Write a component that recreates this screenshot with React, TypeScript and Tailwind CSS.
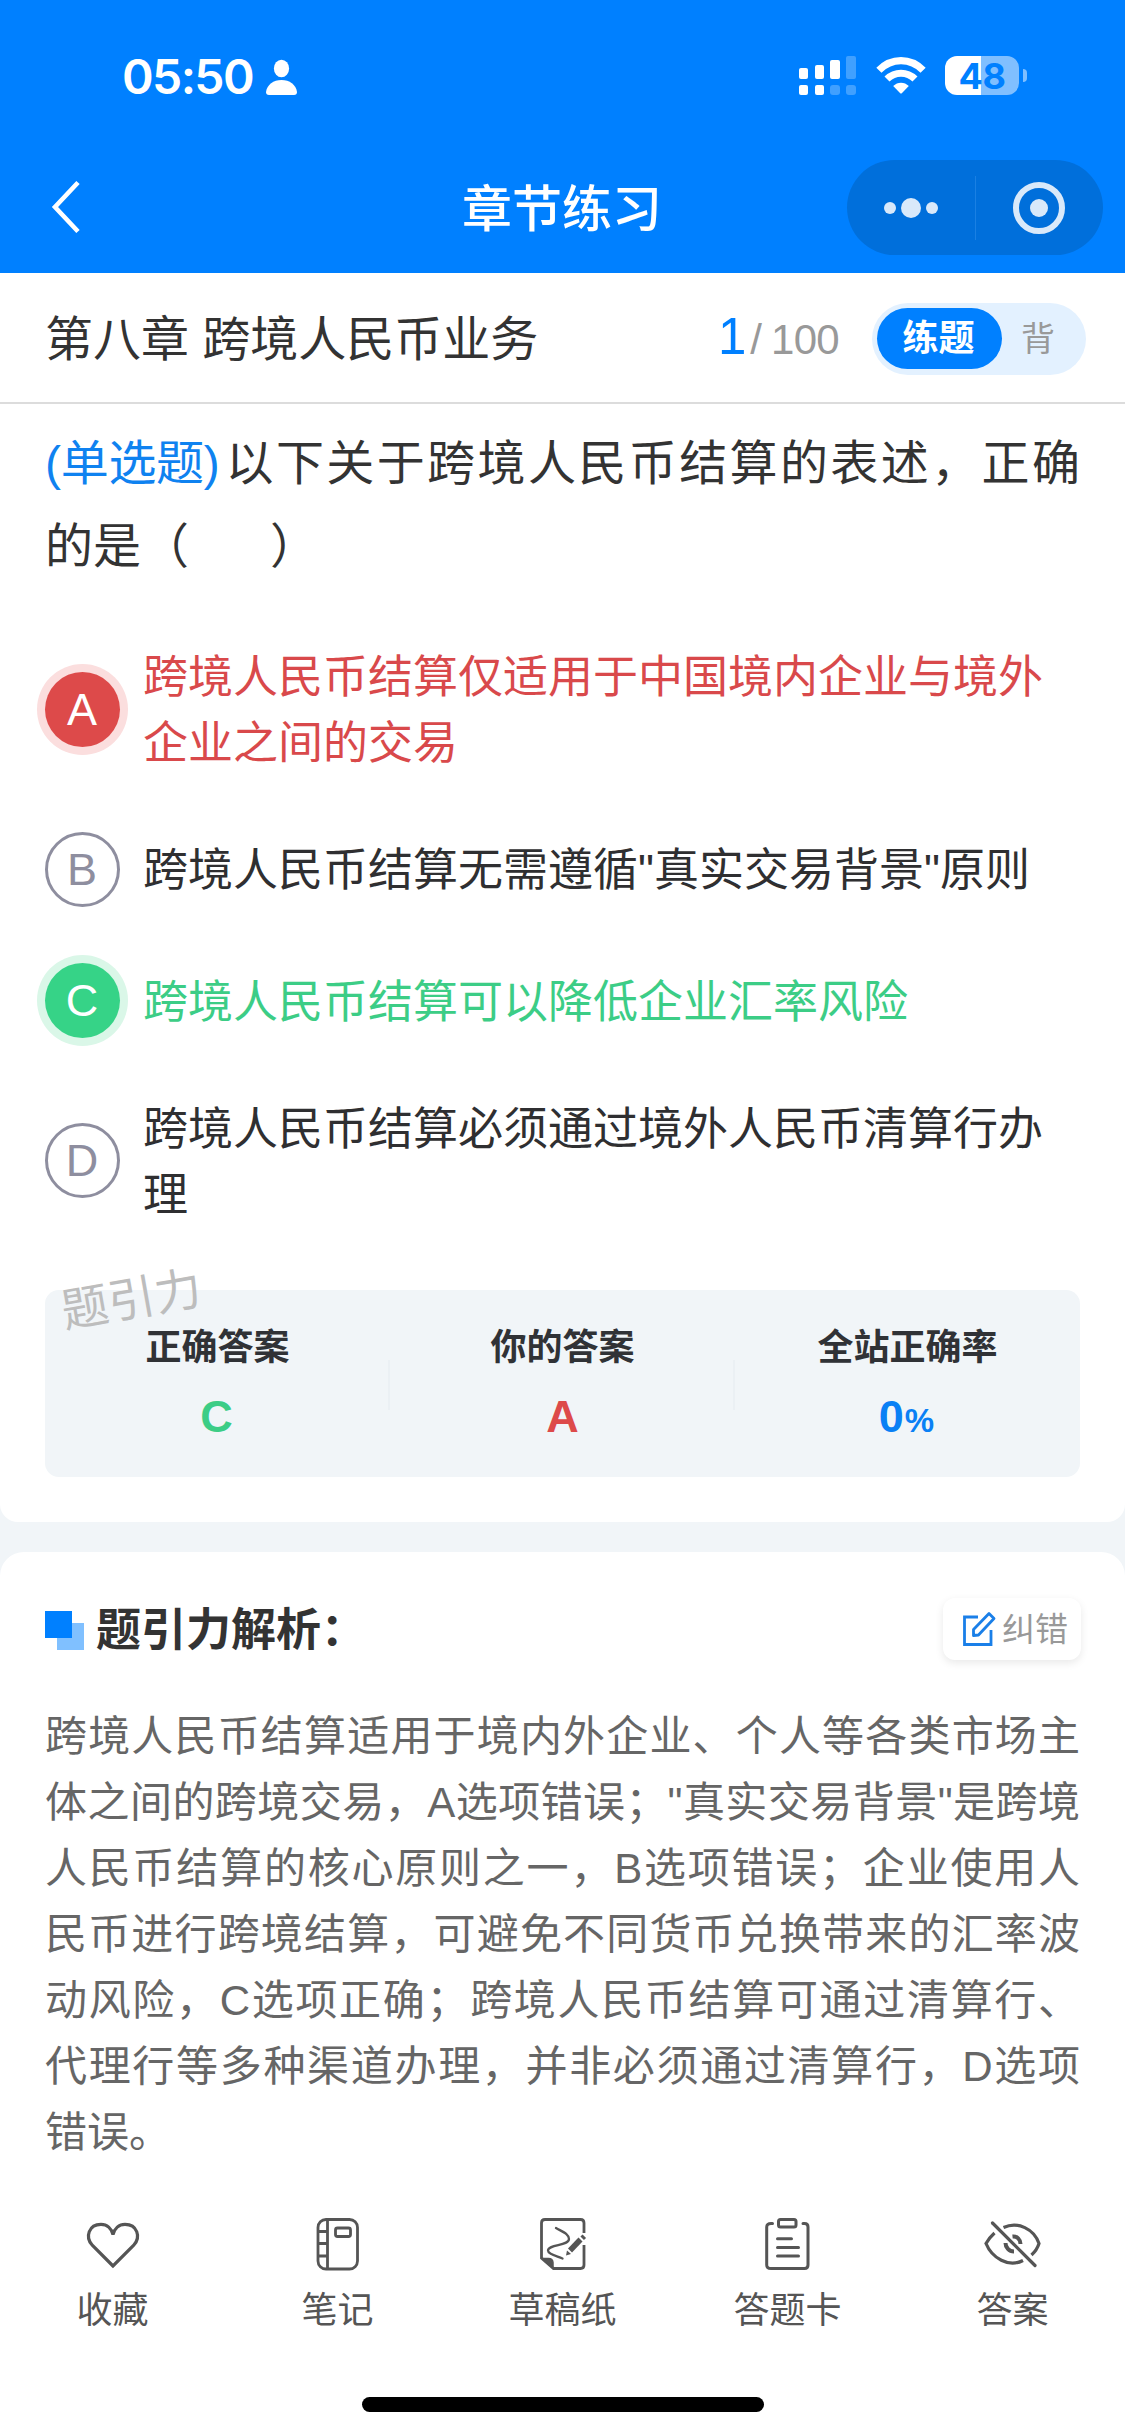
import React from "react";

const CJK = "font-['Liberation_Sans','Noto_Sans_CJK_SC',sans-serif]";

function StatusBar() {
  return (
    <div className="flex h-[149px] items-start justify-between pl-[122px] pr-[98px]">
      <div className="mt-[53px] flex items-center">
        <span className="w-[132px] whitespace-nowrap font-['Inter',sans-serif] text-[48px] font-semibold leading-[48px] tracking-[-1.6px]">
          05:50
        </span>
        <svg className="ml-3" width="31" height="36" viewBox="0 0 31 36" fill="#fff">
          <ellipse cx="15.5" cy="9.5" rx="7.6" ry="8.8" />
          <path d="M3 36Q0 36 0 33C1 25.500 7.500 21 15.500 21S30 25.500 31 33Q31 36 28 36Z" />
        </svg>
      </div>
      <div className="mt-[56px] flex items-start">
        <svg width="57" height="39" viewBox="0 0 57 39" fill="#fff">
          <rect x="0" y="12" width="9" height="11" rx="2" />
          <rect x="16" y="9" width="9" height="14" rx="2" />
          <rect x="31" y="4" width="10" height="19" rx="2" />
          <rect x="47" y="0" width="10" height="23" rx="2" opacity=".25" />
          <rect x="0" y="29" width="9" height="10" rx="2" />
          <rect x="16" y="29" width="9" height="10" rx="2" />
          <rect x="31" y="29" width="10" height="10" rx="3" opacity=".25" />
          <rect x="47" y="29" width="10" height="10" rx="3" opacity=".25" />
        </svg>
        <svg className="ml-5 mt-[1px]" width="50" height="37" viewBox="0 0 50 37" fill="none">
          <path d="M2.900 13.200C15.500 .4 34.500 .4 47.100 13.200" stroke="#fff" strokeWidth="7.200" />
          <path d="M11 22C19 14.300 31 14.300 39 22" stroke="#fff" strokeWidth="7.200" />
          <path d="M17.200 29C21.500 24.500 28.500 24.500 32.800 29L26 36Q25 37 24 36Z" fill="#fff" />
        </svg>
        <div className="ml-[19px] flex items-center gap-1">
          <div className="flex h-[39px] w-[74px] items-center justify-center rounded-[12px] bg-[linear-gradient(90deg,#fff_36px,#80bfff_36px)] font-['Inter',sans-serif] text-[36px] font-bold leading-none tracking-[-0.5px] text-[#0080ff]">
            48
          </div>
          <div className="h-[13px] w-[4px] rounded-r-full bg-[#80bfff]" />
        </div>
      </div>
    </div>
  );
}

function NavBar() {
  return (
    <div className="grid h-[124px] grid-cols-[1fr_auto_1fr] items-start">
      <svg className="ml-[50px] mt-[31px]" width="32" height="54" viewBox="0 0 32 54" fill="none" stroke="#fff" strokeWidth="4.600">
        <path d="M28 2.500L5 27L28 51.500" />
      </svg>
      <h1 className="mt-[30px] text-[50px] font-medium leading-[62px] -ml-px">章节练习</h1>
      <div className="mr-[22px] mt-[11px] flex h-[95px] w-[256px] items-center justify-self-end rounded-full bg-[#006fdb]">
        <div className="flex flex-1 items-center justify-center gap-[5px]">
          <i className="size-[12px] rounded-full bg-[#d9e9fa]" />
          <i className="size-[20px] rounded-full bg-[#d9e9fa]" />
          <i className="size-[12px] rounded-full bg-[#d9e9fa]" />
        </div>
        <div className="h-[64px] w-px bg-[#1a80e3]" />
        <div className="flex flex-1 items-center justify-center">
          <div className="flex size-[52px] items-center justify-center rounded-full border-[6px] border-[#d9e9fa]">
            <i className="size-[18px] rounded-full bg-[#d9e9fa]" />
          </div>
        </div>
      </div>
    </div>
  );
}

function ChapterBar() {
  return (
    <div className="flex h-[131px] items-center border-b-2 border-[#dcdcdc] pl-[45px] pr-[39px] pt-[2px]">
      <div className="whitespace-nowrap pt-[3px] text-[48px] leading-[64px] text-[#333]">第八章 跨境人民币业务</div>
      <div className="ml-auto flex items-baseline font-['Liberation_Sans',sans-serif] text-[42px] leading-[60px] text-[#999]">
        <span className="text-[51px] text-[#0080ff]">1</span>
        <span className="ml-[4px]">/</span>
        <span className="ml-[9px] tracking-[-0.7px]">100</span>
      </div>
      <div className="ml-[33px] flex h-[72px] w-[214px] items-center rounded-full bg-[#e3f1ff] p-[5px]">
        <div className="flex h-[61px] w-[125px] items-center justify-center rounded-full bg-[#0080ff] pr-[2px] pt-px text-[36px] font-bold text-white">
          练题
        </div>
        <div className="ml-[19px] pt-[2px] text-[34px] text-[#999]">背</div>
      </div>
    </div>
  );
}

type Tone = "wrong" | "right" | "plain";

const options: { key: string; lines: string[]; tone: Tone }[] = [
  { key: "A", lines: ["跨境人民币结算仅适用于中国境内企业与境外", "企业之间的交易"], tone: "wrong" },
  { key: "B", lines: ['跨境人民币结算无需遵循"真实交易背景"原则'], tone: "plain" },
  { key: "C", lines: ["跨境人民币结算可以降低企业汇率风险"], tone: "right" },
  { key: "D", lines: ["跨境人民币结算必须通过境外人民币清算行办", "理"], tone: "plain" },
];

const circleTone: Record<Tone, string> = {
  wrong: "bg-[#dd4a4a] text-white ring-[8px] ring-[#fbdede]",
  right: "bg-[#36d387] text-white ring-[8px] ring-[#daf7e8]",
  plain: "border-[3px] border-[#8e8e9f] text-[#8e8e9f]",
};

const textTone: Record<Tone, string> = {
  wrong: "text-[#d9494b]",
  right: "text-[#3ccd86]",
  plain: "text-[#2f2f31]",
};

function Options() {
  return (
    <div className="mt-[55px] flex flex-col gap-[56.5px]">
      {options.map((o) => (
        <div key={o.key} className="flex items-center gap-[23px]">
          <div
            className={`flex size-[75px] shrink-0 items-center justify-center rounded-full pr-px text-[45px] leading-none ${circleTone[o.tone]}`}
          >
            {o.key}
          </div>
          <div className={`-mb-[2px] whitespace-nowrap pt-[2px] text-[45px] leading-[66px] ${textTone[o.tone]}`}>
            {o.lines.map((l) => (
              <div key={l}>{l}</div>
            ))}
          </div>
        </div>
      ))}
    </div>
  );
}

function Summary() {
  return (
    <div className="relative mt-[63px] grid h-[187px] grid-cols-3 rounded-[14px] bg-[#f1f5f8]">
      <div className="absolute left-[16px] top-[-24px] -rotate-[10deg] whitespace-nowrap text-[47px] leading-[68px] text-[#bdbdbd]">
        题引力
      </div>
      <div className="relative flex flex-col items-center pt-[33px]">
        <div className="text-[36px] font-bold leading-[50px] text-[#303236]">正确答案</div>
        <div className="mt-[18px] pr-[2px] text-[45px] font-bold leading-[52px] text-[#3ccd86]">C</div>
        <i className="absolute right-0 top-[70px] h-[50px] w-[2px] bg-[#ebf0f4]" />
      </div>
      <div className="relative flex flex-col items-center pt-[33px]">
        <div className="text-[36px] font-bold leading-[50px] text-[#303236]">你的答案</div>
        <div className="mt-[18px] text-[45px] font-bold leading-[52px] text-[#dd4a4a]">A</div>
        <i className="absolute right-0 top-[70px] h-[50px] w-[2px] bg-[#ebf0f4]" />
      </div>
      <div className="flex flex-col items-center pt-[33px]">
        <div className="text-[36px] font-bold leading-[50px] text-[#303236]">全站正确率</div>
        <div className="mt-[18px] pr-[2px] text-[45px] font-bold leading-[52px] text-[#0a80f5]">
          0<span className="ml-px text-[33px]">%</span>
        </div>
      </div>
    </div>
  );
}

const analysis = [
  "跨境人民币结算适用于境内外企业、个人等各类市场主",
  '体之间的跨境交易，A选项错误；"真实交易背景"是跨境',
  "人民币结算的核心原则之一，B选项错误；企业使用人",
  "民币进行跨境结算，可避免不同货币兑换带来的汇率波",
  "动风险，C选项正确；跨境人民币结算可通过清算行、",
  "代理行等多种渠道办理，并非必须通过清算行，D选项",
];

function Analysis() {
  return (
    <section className="mt-[30px] flex-1 rounded-t-[24px] bg-white px-[45px] pt-[45px]">
      <div className="flex h-[64px] items-center">
        <div className="relative mt-[2px] size-[39px]">
          <i className="absolute bottom-0 right-0 size-[27px] bg-[#80c0ff]" />
          <i className="absolute left-0 top-0 size-[27px] bg-[#0080ff]" />
        </div>
        <h2 className="ml-3 pt-[3px] text-[45px] font-bold leading-[64px] text-[#333]">题引力解析：</h2>
        <div className="-mr-px ml-auto flex h-[62px] w-[138px] items-center rounded-[12px] bg-white pl-[19px] text-[33px] text-[#999] shadow-[0_3px_9px_rgba(0,0,0,0.09)]">
          <svg className="mr-[6px]" width="34" height="36" viewBox="0 0 34 36" fill="none" stroke="#1a7fe8" strokeWidth="2.800">
            <path d="M16 6H2.500V33.500H29V19" />
            <path d="M11.500 24.500V18.500L27 2.500L32 7.500L16.500 24Z" strokeLinejoin="round" />
          </svg>
          <span className="pt-[2px]">纠错</span>
        </div>
      </div>
      <div className="mt-[43px] whitespace-nowrap text-[42px] leading-[66px] text-[#666]">
        {analysis.map((line) => (
          <div key={line} className="[text-align-last:justify]">
            {line}
          </div>
        ))}
        <div>错误。</div>
      </div>
    </section>
  );
}

const HeartIcon = () => (
  <svg width="60" height="60" viewBox="0 0 60 60" fill="none" stroke="#555" strokeWidth="3.200">
    <path d="M30 52L9.500 31.500C1.500 23 6 10.300 18 10.300C24 10.300 28.500 14.500 30 20.500C31.500 14.500 36 10.300 42 10.300C54 10.300 58.500 23 50.500 31.500Z" />
  </svg>
);

const NotebookIcon = () => (
  <svg width="60" height="60" viewBox="0 0 60 60" fill="none" stroke="#555" strokeWidth="2.800">
    <rect x="10" y="5.500" width="39.500" height="49.500" rx="8" />
    <path d="M19.500 5.500V55M10 17.500H19.500M10 29.500H19.500M10 42H19.500" />
    <rect x="27.500" y="14" width="15" height="8.500" rx="2" />
  </svg>
);

const DraftIcon = () => (
  <svg width="60" height="60" viewBox="0 0 60 60" fill="none" stroke="#555" strokeWidth="2.800">
    <path d="M51 19V9Q51 5.500 47.500 5.500H12Q8.500 5.500 8.500 9V44L20.500 54.500H47.500Q51 54.500 51 51V31" />
    <path d="M9.500 44.500H15.500Q19.800 44.500 20 48.500V53.500Z" fill="#555" strokeWidth="1.500" />
    <path d="M23 14C30 18 36 20 36 25C36 32 15 30 15 36.500C15 40 22 41.500 29.500 44.500" strokeWidth="2.300" strokeLinecap="round" />
    <path d="M37 36.500L47.500 25.500" strokeWidth="5.600" />
    <path d="M33 41.500L34 36.500L38 40Z" fill="#555" stroke="none" />
    <path d="M48.500 21.500L52 25" strokeWidth="3" />
  </svg>
);

const CardIcon = () => (
  <svg width="60" height="60" viewBox="0 0 60 60" fill="none" stroke="#555" strokeWidth="3" strokeLinecap="round">
    <path d="M14.500 9.500H13Q8.700 9.500 8.700 13V51Q8.700 54.500 13 54.500H46.500Q50 54.500 50 51V13Q50 9.500 46.500 9.500H45" />
    <rect x="20.500" y="5.500" width="17.500" height="7.500" rx="2" />
    <path d="M19.500 24.800H33.500M19.500 33.500H40.500M19.500 42H40.500" />
  </svg>
);

const EyeOffIcon = () => (
  <svg width="60" height="60" viewBox="0 0 60 60" fill="none" stroke="#555" strokeWidth="3.200">
    <path d="M20.500 13.500C35 7 51 15 56 29.500Q54 36 48.500 41" />
    <path d="M11.500 19Q6 24 3 29.500C9 44 25.500 54 40 46.500" />
    <path d="M29.500 22.500C34 22 37.500 25.500 37.500 30" strokeWidth="4" />
    <path d="M22.500 29C22.500 33.500 26 37.500 31 37.500" strokeWidth="4" />
    <path d="M9.500 9L52 51.500" strokeLinecap="round" />
  </svg>
);

const tabs = [
  { label: "收藏", Icon: HeartIcon },
  { label: "笔记", Icon: NotebookIcon },
  { label: "草稿纸", Icon: DraftIcon },
  { label: "答题卡", Icon: CardIcon },
  { label: "答案", Icon: EyeOffIcon },
];

export default function App() {
  return (
    <div className={`flex h-[2436px] w-[1125px] flex-col overflow-hidden bg-[#f1f5f8] ${CJK}`}>
      <header className="h-[273px] shrink-0 bg-[#0080ff] text-white">
        <StatusBar />
        <NavBar />
      </header>
      <section className="h-[1249px] shrink-0 rounded-b-[18px] bg-white">
        <ChapterBar />
        <div className="px-[45px] pt-[18px]">
          <div className="whitespace-nowrap text-[48px] leading-[83px] text-[#333]">
            <div className="flex">
              <span className="tracking-[-0.3px] text-[#0f82f0]">(单选题)</span>
              <span className="ml-[6px] flex-1 [text-align-last:justify]">以下关于跨境人民币结算的表述，正确</span>
            </div>
            <div>
              的是（<span className="inline-block w-[81px]" />）
            </div>
          </div>
          <Options />
          <Summary />
        </div>
      </section>
      <Analysis />
      <nav className="grid shrink-0 grid-cols-5 bg-white">
        {tabs.map(({ label, Icon }) => (
          <div key={label} className="flex flex-col items-center">
            <Icon />
            <span className="mt-[11px] text-[36px] leading-[52px] text-[#555]">{label}</span>
          </div>
        ))}
      </nav>
      <div className="flex h-[99px] shrink-0 items-end justify-center bg-white pb-[24px]">
        <div className="h-[15px] w-[402px] rounded-full bg-black" />
      </div>
    </div>
  );
}
